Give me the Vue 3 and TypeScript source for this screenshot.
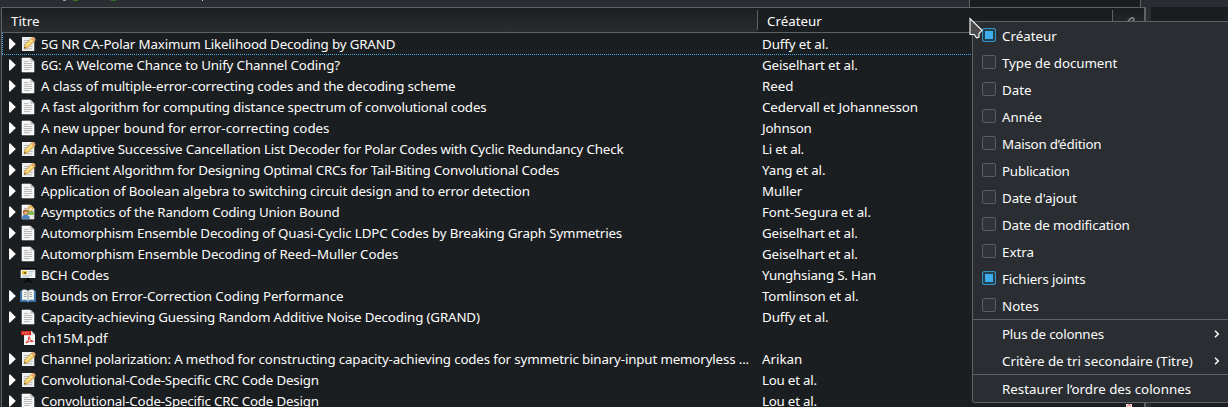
<script setup lang="ts">
type Icon = 'preprint' | 'page' | 'conference' | 'slides' | 'book' | 'pdf'
// fit / cfit: total width adjustment in px, spread over the letters of the text
interface Row { title: string; fit: number; creator: string; cfit: number; icon: Icon; leaf?: boolean }
interface MenuItem { label: string; fit: number; checked?: boolean }

const rows: Row[] = [
  { title: '5G NR CA-Polar Maximum Likelihood Decoding by GRAND', fit: -8, creator: 'Duffy et al.', cfit: -1, icon: 'preprint' },
  { title: '6G: A Welcome Chance to Unify Channel Coding?', fit: -6, creator: 'Geiselhart et al.', cfit: -2, icon: 'page' },
  { title: 'A class of multiple-error-correcting codes and the decoding scheme', fit: -8, creator: 'Reed', cfit: 0, icon: 'page' },
  { title: 'A fast algorithm for computing distance spectrum of convolutional codes', fit: -11, creator: 'Cedervall et Johannesson', cfit: -2, icon: 'page' },
  { title: 'A new upper bound for error-correcting codes', fit: 0, creator: 'Johnson', cfit: -1, icon: 'page' },
  { title: 'An Adaptive Successive Cancellation List Decoder for Polar Codes with Cyclic Redundancy Check', fit: -15, creator: 'Li et al.', cfit: -2, icon: 'preprint' },
  { title: 'An Efficient Algorithm for Designing Optimal CRCs for Tail-Biting Convolutional Codes', fit: -14.5, creator: 'Yang et al.', cfit: -1, icon: 'preprint' },
  { title: 'Application of Boolean algebra to switching circuit design and to error detection', fit: -11, creator: 'Muller', cfit: 0, icon: 'page' },
  { title: 'Asymptotics of the Random Coding Union Bound', fit: -8, creator: 'Font-Segura et al.', cfit: -1, icon: 'conference' },
  { title: 'Automorphism Ensemble Decoding of Quasi-Cyclic LDPC Codes by Breaking Graph Symmetries', fit: -12, creator: 'Geiselhart et al.', cfit: -2, icon: 'page' },
  { title: 'Automorphism Ensemble Decoding of Reed–Muller Codes', fit: -5, creator: 'Geiselhart et al.', cfit: -2, icon: 'page' },
  { title: 'BCH Codes', fit: -1, creator: 'Yunghsiang S. Han', cfit: -3, icon: 'slides', leaf: true },
  { title: 'Bounds on Error-Correction Coding Performance', fit: -3, creator: 'Tomlinson et al.', cfit: -2, icon: 'book' },
  { title: 'Capacity-achieving Guessing Random Additive Noise Decoding (GRAND)', fit: -10, creator: 'Duffy et al.', cfit: -1, icon: 'page' },
  { title: 'ch15M.pdf', fit: 0, creator: '', cfit: 0, icon: 'pdf', leaf: true },
  { title: 'Channel polarization: A method for constructing capacity-achieving codes for symmetric binary-input memoryless ...', fit: -17, creator: 'Arikan', cfit: 0, icon: 'preprint' },
  { title: 'Convolutional-Code-Specific CRC Code Design', fit: -8, creator: 'Lou et al.', cfit: -2, icon: 'preprint' },
  { title: 'Convolutional-Code-Specific CRC Code Design', fit: -8, creator: 'Lou et al.', cfit: -2, icon: 'page' },
]

const columns: MenuItem[] = [
  { label: 'Créateur', fit: 0, checked: true },
  { label: 'Type de document', fit: -1 },
  { label: 'Date', fit: 0 },
  { label: 'Année', fit: 0 },
  { label: 'Maison d’édition', fit: -3 },
  { label: 'Publication', fit: -2 },
  { label: 'Date d\'ajout', fit: -1 },
  { label: 'Date de modification', fit: -3 },
  { label: 'Extra', fit: 0 },
  { label: 'Fichiers joints', fit: -2, checked: true },
  { label: 'Notes', fit: 0 },
]
const submenus: MenuItem[] = [
  { label: 'Plus de colonnes', fit: -3 },
  { label: 'Critère de tri secondaire (Titre)', fit: 0 },
]

const tracking = (text: string, fit: number) =>
  fit ? { letterSpacing: (fit / (text.length - 1)).toFixed(4) + 'px' } : undefined
</script>

<template>
  <div class="window">
    <div class="strip">
      <i class="frag blue"></i><i class="frag green"></i><i class="frag green two"></i><i class="frag white"></i>
      <div class="search"></div>
    </div>
    <div class="body">
      <div class="tree">
        <div class="header">
          <div class="h-title">Titre</div>
          <div class="h-creator">Créateur</div>
          <div class="h-clip">
            <svg width="12" height="14" viewBox="0 0 12 14" fill="none" stroke="#85888a">
              <path d="M1.5 8.5 6 3Q7.5 1.2 9 2T9.3 5L4.5 11" stroke-width="1.7" />
              <path d="M4 9 7.3 4.8" stroke-width="1.3" />
            </svg>
          </div>
        </div>
        <div v-for="(r, i) in rows" :key="i" class="row" :class="{ focused: i === 0 }">
          <svg class="twisty" width="8" height="12" viewBox="0 0 8 12"><path v-if="!r.leaf" d="M1 .4H2.2L7.8 6 2.2 11.6H1Z" fill="#fff" /></svg>
          <svg class="icon" width="16" height="16" viewBox="0 0 16 16">
            <g v-if="r.icon === 'page' || r.icon === 'conference'">
              <path d="M2 1H10.5L14 4.5V15H2Z" fill="#f5f5f5" stroke="#fff" stroke-width=".6" />
              <path d="M10.3 1V4.7H14Z" fill="#c2c4c5" />
              <path d="M4 4.5H8.5M4 6.5H12M4 8.5H12M4 10.5H12M4 12.5H10" stroke="#b5b7b8" stroke-width=".9" />
            </g>
            <g v-if="r.icon === 'preprint'">
              <path d="M2 1H14.3V15H2Z" fill="#f0f0f0" />
              <path d="M4 4.5H9M4 6.5H7.5M4 8.5H6M10 10.5H12.5M4 12.8H12" stroke="#b2b2ae" stroke-width=".9" />
              <path d="M4 12.4 5 8.8 11.6 2Q13.2 1 14.6 2.2T14.8 4.8L7.7 11.6Z" fill="#f5cc62" stroke="#b98728" stroke-width=".7" />
              <path d="M6.2 9.6 12.6 3.3" stroke="#ffe9a0" stroke-width="1.3" />
              <path d="M12.2 1.9Q13.3 1.2 14.5 2.3T14.6 4.6L13.7 5.4 11.4 2.8Z" fill="#e3a470" />
              <path d="M4 12.4 4.5 10.7 5.8 11.9Z" fill="#554838" />
            </g>
            <g v-else-if="r.icon === 'conference'">
              <path d="M7.2 11Q7 6.3 10.5 6.3T14.6 11Z" fill="#85b95c" />
              <circle cx="10.4" cy="4.2" r="2.7" fill="#e9ae43" /><circle cx="10.5" cy="4.9" r="1.7" fill="#ffdfad" />
              <path d="M2 15Q1.8 10.4 5.4 10.4T10 15Z" fill="#4c83c4" />
              <circle cx="5.6" cy="8.3" r="2.7" fill="#ad6630" /><circle cx="5.8" cy="9" r="1.7" fill="#efb57f" />
              <path d="M10.5 14.8V11.5H14V14.8Z" fill="#f0e4dc" />
            </g>
            <g v-else-if="r.icon === 'slides'">
              <path d="M7.5 11V15.5M8 12 4 15.5M8 12 12 15.5" stroke="#050607" stroke-width="1.2" />
              <path d="M0 1.2H16V3H0Z" fill="#08090a" />
              <path d="M.7 2.8H15.3V11H.7Z" fill="#f4f7f4" />
              <path d="M2 4H7V7.3H2Z" fill="#e3ba27" /><path d="M4 5H6V7H4Z" fill="#8c6b13" />
              <path d="M8.2 4.5H13.7M8.2 6.3H12.5M2.5 8.7H12M2.5 10H9" stroke="#a3bcc4" stroke-width=".8" />
            </g>
            <g v-else-if="r.icon === 'book'">
              <path d="M0 3H16V14H9L8 15 7 14H0Z" fill="#316da3" />
              <path d="M2 2Q6 1 8 3Q10 1 14 2V12Q10 11 8 13Q6 11 2 12Z" fill="#f4f4ee" stroke="#a9c6dc" stroke-width=".5" />
              <path d="M8 3V13M4 4.5H6.5M4 6.5H6.5M4 8.5H6.5M9.5 4.5H12M9.5 6.5H12M9.5 8.5H12" stroke="#8b9194" stroke-width=".8" />
            </g>
            <g v-else-if="r.icon === 'pdf'">
              <path d="M4 1H11.5L15 4.5V15H4Z" fill="#f7f7f7" /><path d="M11.5 1V4.5H15Z" fill="#c7c7c7" />
              <path d="M5.8 13Q9.2 10.5 9 6.5Q9.5 10.8 13.2 11.4Q9.2 10.5 5.8 13Z" fill="none" stroke="#e7342b" stroke-width="1" />
              <path d="M1 1H11V5.2H1Z" fill="#dc1e16" />
              <path d="M3 4.3V2H4.2V3.2H3M5.5 2V4.2H6.8V2ZM8.3 4.3V2H9.5M8.3 3.1H9.3" fill="none" stroke="#f39b94" stroke-width=".5" />
            </g>
          </svg>
          <span class="title" :style="tracking(r.title, r.fit)">{{ r.title }}</span>
          <span class="creator" :style="tracking(r.creator, r.cfit)">{{ r.creator }}</span>
        </div>
      </div>
      <div class="pane"></div>
    </div>

    <div class="menu">
      <div v-for="c in columns" :key="c.label" class="item">
        <span class="box" :class="{ on: c.checked }"></span><span :style="tracking(c.label, c.fit)">{{ c.label }}</span>
      </div>
      <div class="sep"></div>
      <div v-for="s in submenus" :key="s.label" class="item plain">
        <span :style="tracking(s.label, s.fit)">{{ s.label }}</span>
        <svg class="chev" width="6" height="8" viewBox="0 0 6 8"><path d="M1 .7 4.3 4 1 7.3" fill="none" stroke="#fcfcfc" stroke-width="1.5" /></svg>
      </div>
      <div class="sep"></div>
      <div class="item plain"><span>Restaurer l’ordre des colonnes</span></div>
    </div>
    <div class="peek">
      <svg width="6" height="4" viewBox="0 0 6 4"><path d="M0 0H6V4H0Z" fill="#f5e9e8" /><path d="M1 2.5 3 .5 5 2" stroke="#dc4640" fill="none" /></svg>
    </div>
    <svg class="cursor" width="16" height="24" viewBox="0 0 16 24">
      <path d="M1 1.5V17.5H5.2L7.5 20.8 10 20V16.5L13 13.3Z" fill="#4b4b4b" stroke="#fff" stroke-width="1.1" />
    </svg>
  </div>
</template>

<style>
html, body { background: #2a2e32; overflow: hidden; }
</style>

<style scoped>
.window { position: relative; width: 1228px; height: 407px; overflow: hidden; background: #2a2e32; color: #fcfcfc; font: 13.333px/21px "Noto Sans", sans-serif; display: flex; flex-direction: column; }
.window * { box-sizing: border-box; }
.strip { height: 7px; flex: none; display: flex; align-items: flex-start; }
.frag { height: 1px; flex: none; }
.blue { width: 3px; margin-left: 63px; background: #7f9caf; }
.green { width: 5px; margin-left: 7px; background: #3a701c; }
.two { margin-left: 33px; }
.white { width: 1px; height: 1px; margin-left: 86px; background: #d7d8d9; }
.search { width: 172px; height: 7px; margin-left: 766px; border: 1px solid #5f6265; border-width: 0 1px; background: #1b1e20; }
.body { display: flex; flex: 1; min-height: 0; }
.tree { width: 1145px; margin-left: 1px; border: 1px solid #5f6265; border-right-width: 2px; border-bottom: 0; background: #1b1e20; flex: none; overflow: hidden; }
.header { display: flex; align-items: center; height: 25px; border-bottom: 1px solid #5f6265; line-height: 24px; }
.h-title { width: 755px; padding: 1px 0 0 9px; height: 24px; background: linear-gradient(#1b1e20, #2a2d30); }
.h-creator { width: 355px; height: 20px; border-left: 1px solid #5f6265; padding-left: 9px; line-height: 22px; }
.h-clip { flex: 1; height: 20px; border-left: 1px solid #5f6265; padding: 6px 0 0 11px; background: linear-gradient(#1b1e20, #2a2d30); }
.h-clip svg { display: block; }
.row { display: flex; align-items: center; height: 21px; white-space: nowrap; padding: 0 0 1px 6px; }
.header + .row { height: 22px; padding-top: 1px; }
.focused {
  background:
    repeating-linear-gradient(90deg, #3daee9 0 1px, transparent 1px 2px) left bottom / 100% 1px no-repeat,
    repeating-linear-gradient(180deg, #3daee9 0 1px, transparent 1px 2px) left top / 1px 100% no-repeat;
}
.twisty { width: 8px; flex: none; }
.icon { margin-left: 4px; flex: none; }
.title { width: 726px; padding-left: 5px; flex: none; height: 21px; }
.creator { height: 21px; }
.pane { margin-left: 5px; flex: 1; background: #1b1e20; }
.menu { position: absolute; left: 972px; top: 21px; width: 257px; height: 382px; border: 1px solid #5f6265; border-radius: 2px; background: #2a2e32; }
.item { display: flex; align-items: center; height: 27px; padding: 1px 8px 0 9px; white-space: nowrap; }
.plain { padding-left: 29px; }
.box { width: 14px; height: 14px; margin: -2px 6px 0 0; border: 1px solid #5a5d61; border-radius: 2px; background: #303438; }
.box.on { border-color: #3493c5; background: #3daee9; box-shadow: inset 0 0 0 2px #243f50; }
.sep { height: 1px; background: #5f6265; }
.chev { margin-left: auto; }
.peek { position: absolute; left: 1126px; top: 403px; line-height: 0; }
.cursor { position: absolute; left: 969px; top: 17px; }
</style>
